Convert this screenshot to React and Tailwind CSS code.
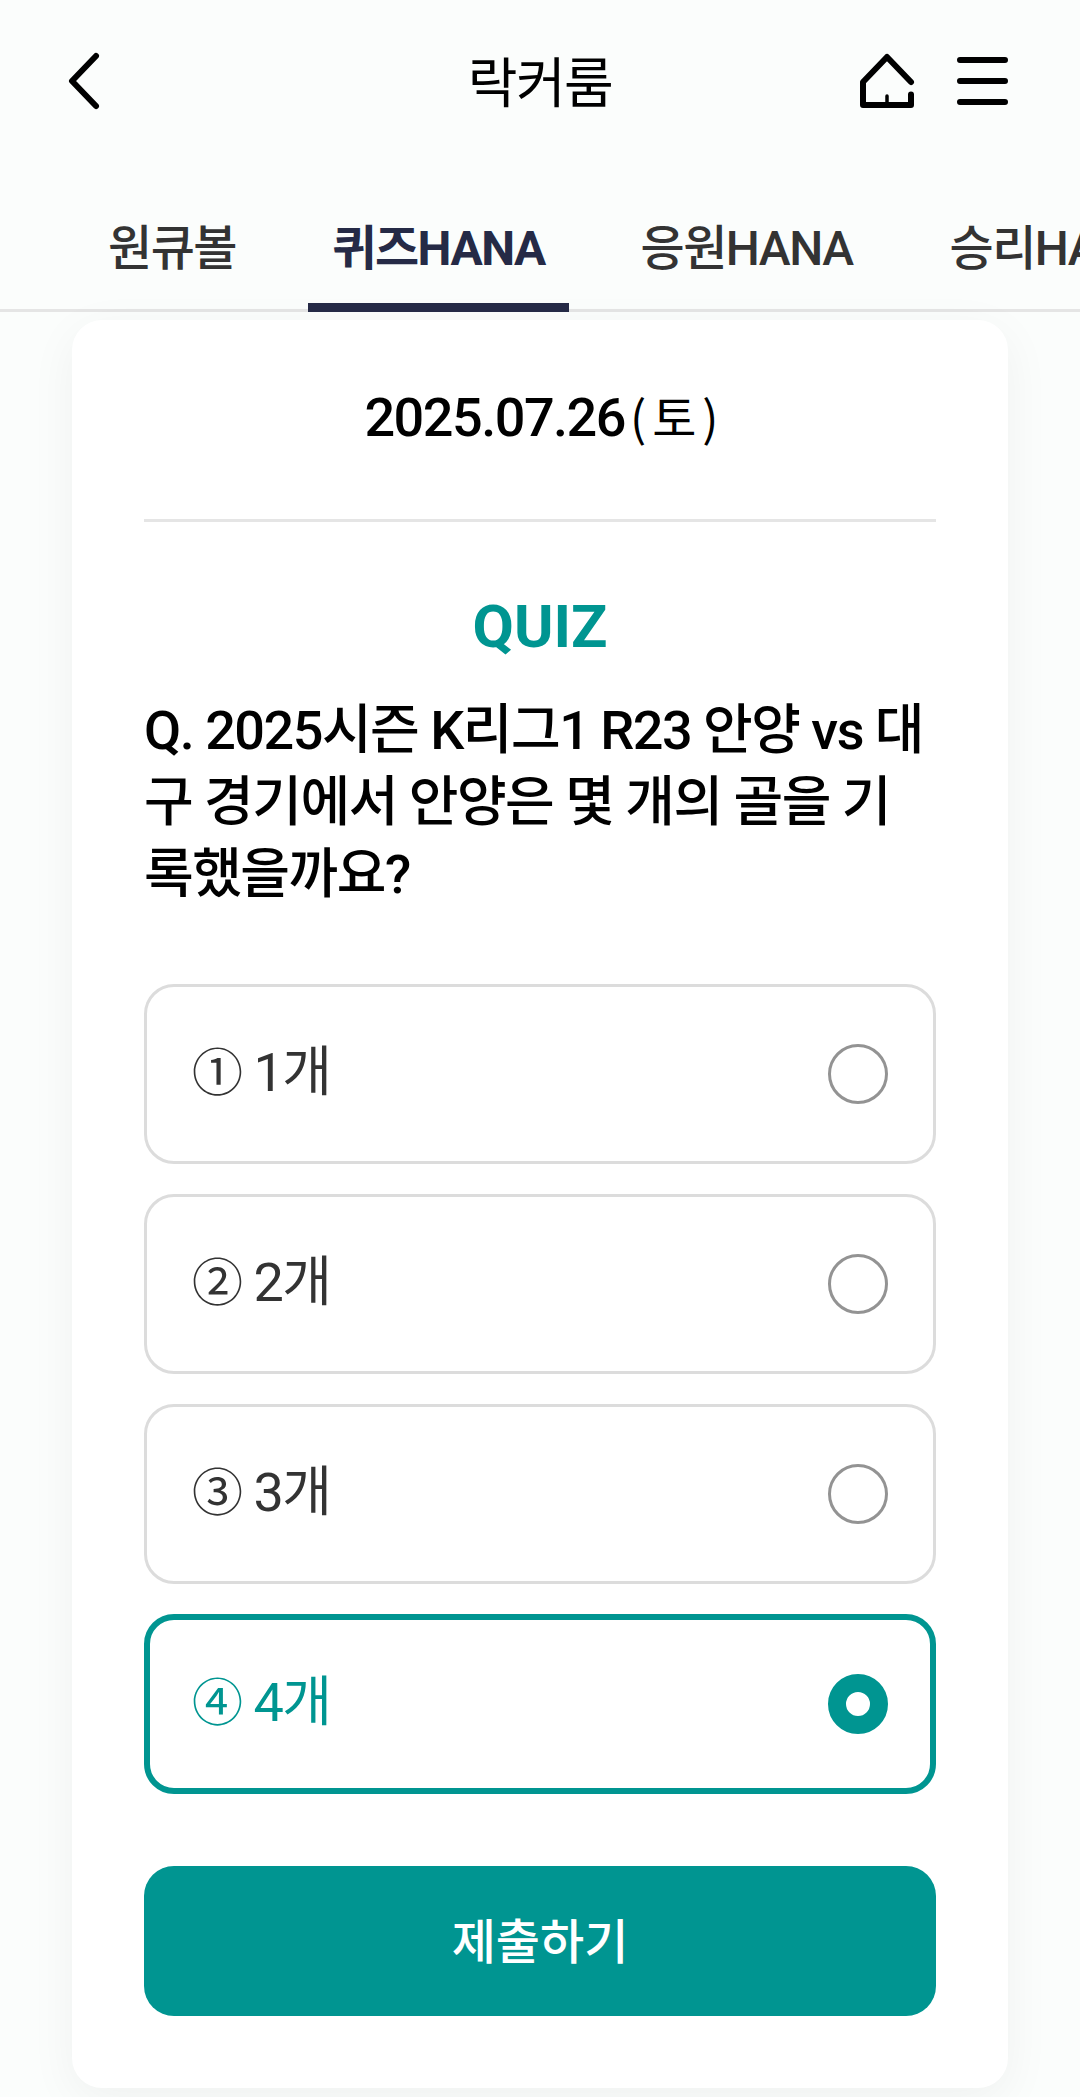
import React, { useState } from 'react';

const tabs = [
  { id: 'ball', name: '원큐볼', className: 'ml-[83px] w-[178px]' },
  { id: 'quiz', name: '퀴즈HANA', className: 'ml-[47px] w-[261px]' },
  { id: 'cheer', name: '응원HANA', className: 'ml-[47px] w-[261px]' },
  { id: 'win', name: '승리HANA', className: 'ml-[48px] w-[261px]' }
];

const options = [
  { id: 1, mark: '①', label: '1개' },
  { id: 2, mark: '②', label: '2개' },
  { id: 3, mark: '③', label: '3개' },
  { id: 4, mark: '④', label: '4개' }
];

function Header() {
  return (
    <header className="grid h-[162px] grid-cols-3 items-center px-[66px]">
      <button aria-label="back" className="justify-self-start">
        <svg width="36" height="60" viewBox="0 0 36 60" fill="none" stroke="#000" strokeWidth="6" strokeLinecap="round" strokeLinejoin="round">
          <path d="M30 5 6 30 30 55" />
        </svg>
      </button>
      <h1 className="pt-[7px] text-center text-[54px] leading-[80px] text-black">락커룸</h1>
      <div className="flex items-center justify-end gap-[37px] pr-[6px]">
        <button aria-label="home">
          <svg width="60" height="60" viewBox="0 0 60 60" fill="none" stroke="#000" strokeWidth="6" strokeLinecap="round" strokeLinejoin="round">
            <path d="M54 31 30 6 6 31V54H54V43.5" />
            <path d="M30 45V54" strokeWidth="3.5" />
          </svg>
        </button>
        <button aria-label="menu">
          <svg width="54" height="60" viewBox="0 0 54 60" stroke="#000" strokeWidth="6" strokeLinecap="round">
            <path d="M6 9H51M6 30H51M6 51H51" />
          </svg>
        </button>
      </div>
    </header>
  );
}

function App() {
  const [activeTab, setActiveTab] = useState('quiz');
  const [selected, setSelected] = useState(4);

  return (
    <div className="h-[2097px] w-[1080px] overflow-hidden bg-[#fbfdfc] font-[Roboto,'Noto_Sans_CJK_KR',sans-serif] tracking-[-1.5px]">
      <Header />

      <nav className="flex h-[150px] overflow-hidden border-b-3 border-[#e5e5e5]">
        {tabs.map((tab) => (
          <button
            key={tab.id}
            onClick={() => setActiveTab(tab.id)}
            className={`h-[150px] shrink-0 pt-[24px] text-center text-[48px] whitespace-nowrap ${tab.className} ${
              activeTab === tab.id ? 'font-bold text-[#252a46]' : 'font-medium text-[#333]'
            }`}
          >
            {tab.name}
          </button>
        ))}
      </nav>
      {/* 선택된 탭 표시줄 */}
      <div className="relative -mt-[9px] ml-[308px] h-[9px] w-[261px] bg-[#252a46]" />

      <main className="mx-[72px] mt-2 h-[1768px] rounded-[30px] bg-white px-[72px] shadow-[0_12px_48px_rgba(0,0,0,0.05)]">
        <div className="flex h-[202px] items-baseline justify-center border-b-3 border-[#e5e5e5] pt-[59px] text-black">
          <span className="text-[54px] leading-[72px] font-medium">2025.07.26</span>
          <span className="-mr-[9px] ml-[5px] font-['Noto_Sans_CJK_KR',sans-serif] text-[48px] leading-[72px] tracking-[6px]">(토)</span>
        </div>

        <h2 className="mt-[69px] text-center text-[60px] leading-[72px] font-bold tracking-normal text-[#009591]">QUIZ</h2>
        <p className="mt-[32px] h-[216px] text-[54px] leading-[72px] font-medium break-all text-black">
          Q. 2025시즌 K리그1 R23 안양 vs 대구 경기에서 안양은 몇 개의 골을 기록했을까요?
        </p>

        <div className="mt-[73px] flex flex-col gap-[30px]">
          {options.map((option) => {
            const checked = option.id === selected;
            return (
              <button
                key={option.id}
                onClick={() => setSelected(option.id)}
                className={`flex h-[180px] items-center justify-between rounded-[30px] ${
                  checked ? 'border-6 border-[#009591] px-[42px] text-[#009591]' : 'border-3 border-[#dcdcdc] px-[45px] text-[#333]'
                }`}
              >
                <span className="pb-[2px] text-[54px] leading-[72px]">
                  <span className="text-[51px] leading-none">{option.mark}</span> {option.label}
                </span>
                <span
                  className={`size-[60px] rounded-full ${
                    checked ? 'border-18 border-[#009591] bg-white' : 'border-3 border-[#939393]'
                  }`}
                />
              </button>
            );
          })}
        </div>

        <button className="mt-[72px] h-[150px] w-full rounded-[30px] bg-[#009591] pt-[3px] text-[48px] font-medium tracking-normal text-white">
          제출하기
        </button>
      </main>
    </div>
  );
}

export default App;
